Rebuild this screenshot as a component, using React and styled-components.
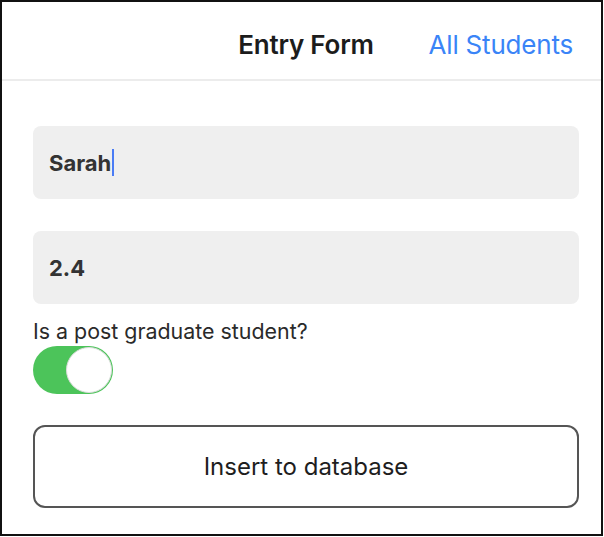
import React from "react";
import styled, { createGlobalStyle } from "styled-components";

const GlobalStyle = createGlobalStyle`
  html, body { margin: 0; padding: 0; background: #fff; }
  body { font-family: Inter, "Noto Sans", "Liberation Sans", sans-serif; }
  * { box-sizing: border-box; }
`;

const Frame = styled.div`
  width: 603px;
  height: 536px;
  border: 2px solid #111;
  display: flex;
  flex-direction: column;
  background: #fff;
`;

const Header = styled.header`
  height: 79px;
  flex: none;
  display: grid;
  grid-template-columns: 1fr auto 1fr;
  align-items: center;
  padding: 8px 28px 0 37px;
  border-bottom: 2px solid #ececec;
`;

const Title = styled.h1`
  grid-column: 2;
  margin: 0;
  font-size: 26px;
  font-weight: 600;
  color: #1c1c1c;
  letter-spacing: -0.2px;
`;

const NavLink = styled.a`
  grid-column: 3;
  justify-self: end;
  font-size: 26px;
  font-weight: 400;
  color: #3a84f7;
  text-decoration: none;
  letter-spacing: -0.2px;
`;

const Form = styled.div`
  display: flex;
  flex-direction: column;
  padding: 45px 22px 0 31px;
`;

const Field = styled.div`
  height: 73px;
  border-radius: 8px;
  background: #efefef;
  display: flex;
  align-items: center;
  padding-left: 16px;
  margin-bottom: ${(p) => p.$gap || 0}px;
  font-size: 22px;
  font-weight: 700;
  color: #333;
`;

const Caret = styled.span`
  display: inline-block;
  width: 2px;
  height: 27px;
  margin-left: 1px;
  background: #4a7cf5;
`;

const Label = styled.div`
  margin-top: 15px;
  font-size: 21.4px;
  line-height: 24px;
  color: #2a2a2a;
`;

const Switch = styled.div`
  margin-top: 3px;
  width: 80px;
  height: 48px;
  border-radius: 24px;
  background: #4cc45a;
  display: flex;
  align-items: center;
  justify-content: ${(p) => (p.$on ? "flex-end" : "flex-start")};
  padding: 0 1px;
`;

const Knob = styled.div`
  width: 46px;
  height: 46px;
  border-radius: 50%;
  background: #fff;
  border: 1px solid #dcdcdc;
`;

const Button = styled.button`
  margin-top: 31px;
  height: 83px;
  width: 100%;
  border: 2px solid #555;
  border-radius: 12px;
  background: #fff;
  font-family: inherit;
  font-size: 24px;
  font-weight: 400;
  color: #1e1e1e;
  cursor: pointer;
`;

export default function App() {
  return (
    <>
      <GlobalStyle />
      <Frame>
        <Header>
          <Title>Entry Form</Title>
          <NavLink href="#">All Students</NavLink>
        </Header>
        <Form>
          <Field $gap={32}>
            Sarah
            <Caret />
          </Field>
          <Field>2.4</Field>
          <Label>Is a post graduate student?</Label>
          <Switch $on>
            <Knob />
          </Switch>
          <Button>Insert to database</Button>
        </Form>
      </Frame>
    </>
  );
}
